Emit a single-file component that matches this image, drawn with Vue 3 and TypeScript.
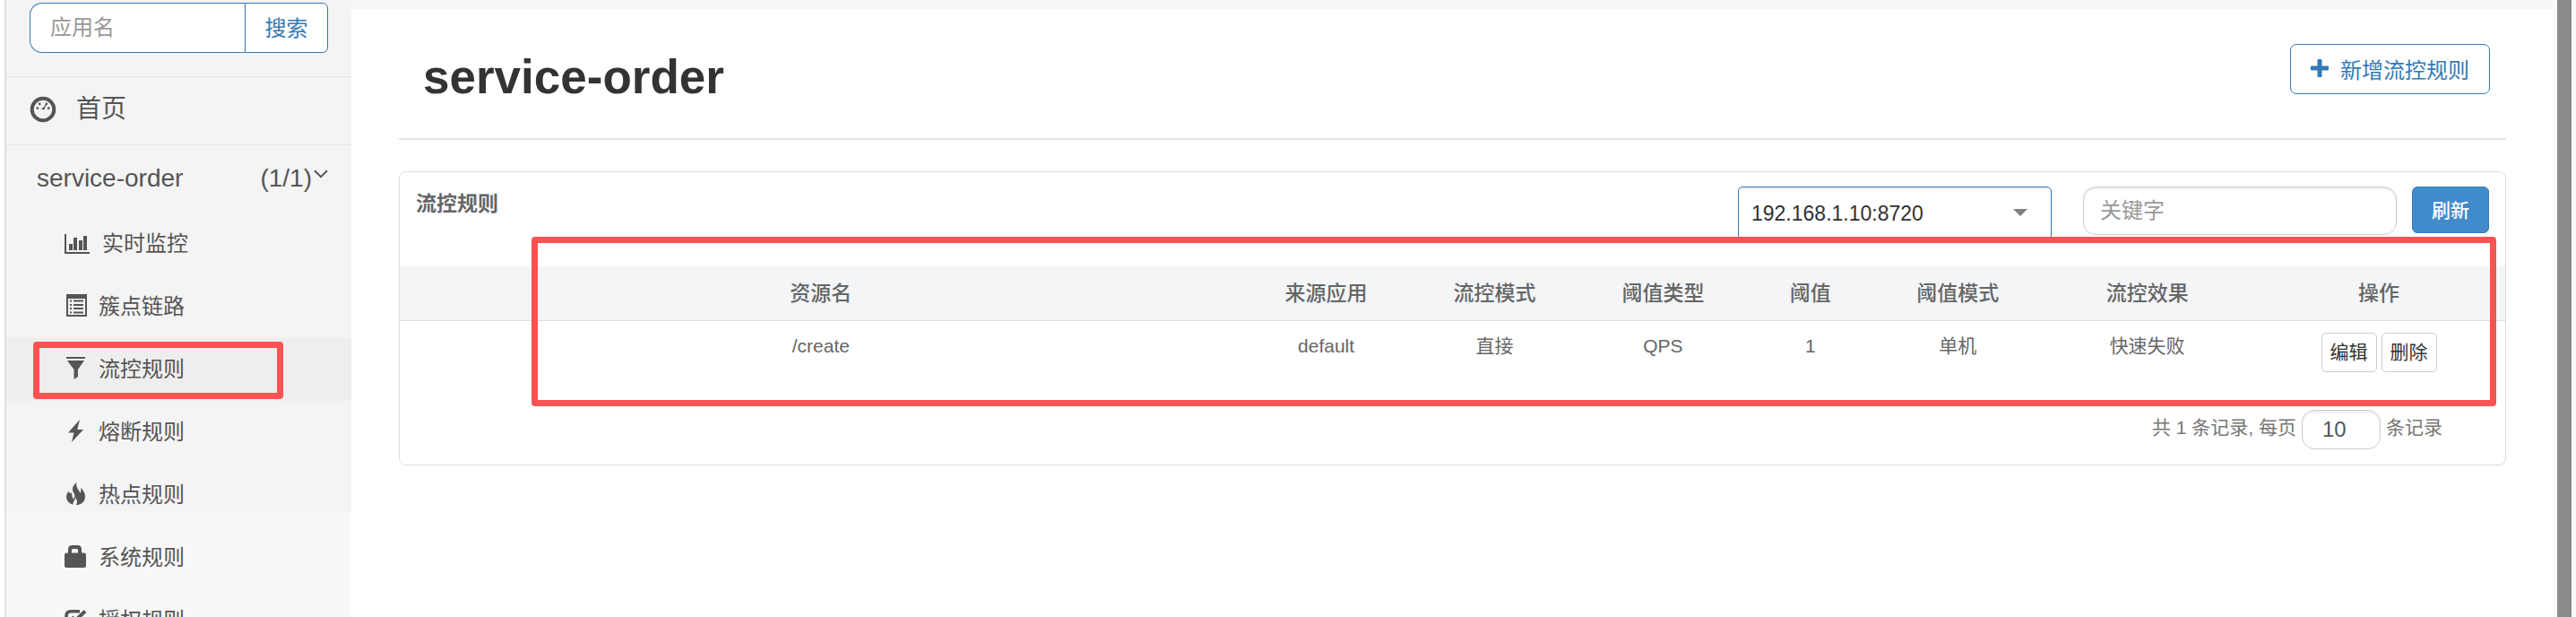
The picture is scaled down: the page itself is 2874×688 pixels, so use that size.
<script setup lang="ts">
import { ref } from 'vue'

interface NavItem {
  icon: string
  label: string
  active?: boolean
}

interface Rule {
  resource: string
  origin: string
  mode: string
  grade: string
  count: number
  cluster: string
  effect: string
}

const navItems: NavItem[] = [
  { icon: 'stats', label: '实时监控' },
  { icon: 'list', label: '簇点链路' },
  { icon: 'filter', label: '流控规则', active: true },
  { icon: 'flash', label: '熔断规则' },
  { icon: 'fire', label: '热点规则' },
  { icon: 'lock', label: '系统规则' },
  { icon: 'check', label: '授权规则' },
]

const columns: string[] = ['资源名', '来源应用', '流控模式', '阈值类型', '阈值', '阈值模式', '流控效果', '操作']

const rules: Rule[] = [
  { resource: '/create', origin: 'default', mode: '直接', grade: 'QPS', count: 1, cluster: '单机', effect: '快速失败' },
]

const appName = ref('')
const keyword = ref('')
const machine = ref('192.168.1.10:8720')
const pageSize = ref('10')
</script>

<template>
  <div class="page">
    <aside class="sidebar">
      <form class="search" @submit.prevent>
        <input v-model="appName" class="search-input" type="text" placeholder="应用名" aria-label="应用名" />
        <button class="search-button" type="submit">搜索</button>
      </form>
      <a class="home" href="#">
        <svg class="home-icon" viewBox="0 0 30 30" aria-hidden="true">
          <circle cx="15" cy="15" r="12.3" fill="none" stroke="currentColor" stroke-width="4" />
          <circle cx="8.8" cy="13.7" r="1.4" />
          <circle cx="11.2" cy="8.9" r="1.4" />
          <circle cx="18.8" cy="8.9" r="1.4" />
          <circle cx="21.2" cy="13.7" r="1.4" />
          <path d="M18.8 9L15.600 14.200" fill="none" stroke="currentColor" stroke-width="1.4" />
          <path d="M12.800 15l2.400-2.200 2 .6-.6 1.800z" />
        </svg>
        <span>首页</span>
      </a>
      <a class="app" href="#">
        <span>service-order</span>
        <span class="app-count">(1/1)
          <svg class="chevron" viewBox="0 0 16 10" aria-hidden="true">
            <path d="M1 1.2l7 7 7-7" fill="none" stroke="currentColor" stroke-width="2" />
          </svg>
        </span>
      </a>
      <nav class="menu">
        <a v-for="item in navItems" :key="item.icon" class="menu-item" :class="{ active: item.active }" href="#">
          <svg v-if="item.icon === 'stats'" class="icon wide" viewBox="0 0 28 28" aria-hidden="true">
            <path d="M0 3h2v20h26v2H0zM5 14h4v7H5zM10 7h4v14h-4zM16 10h4v11h-4zM21 5h4v16h-4z" />
          </svg>
          <svg v-else-if="item.icon === 'list'" class="icon" viewBox="0 0 24 28" aria-hidden="true">
            <path fill-rule="evenodd" d="M2 0h23v25H2zM4 5v18h19V5zM6 6.5h2v2H6zM10 6.5h11v2H10zM6 11h2v2H6zM10 11h11v2H10zM6 15h2v2H6zM10 15h11v2H10zM6 19.5h2v2H6zM10 19.5h11v2H10z" />
          </svg>
          <svg v-else-if="item.icon === 'filter'" class="icon" viewBox="0 0 24 28" aria-hidden="true">
            <path d="M2 0h21v2H2zM3 4h19l-7 10v8l-4.500 3V14z" />
          </svg>
          <svg v-else-if="item.icon === 'flash'" class="icon" viewBox="0 0 24 28" aria-hidden="true">
            <path d="M17 0L4 14.5h6.5L8 25l13-14h-6.8z" />
          </svg>
          <svg v-else-if="item.icon === 'fire'" class="icon" viewBox="0 0 24 28" aria-hidden="true">
            <path d="M13.5 0C9 3.500 7.500 7.500 10.500 12c1.300 2 1.500 4.500-.5 6.500C8.500 16.500 8 14 8.200 11.500 6.500 12.500 5.200 12 4.800 9.800 2.500 12 1.700 15 2.200 17.800 3 21.500 6 24 9.800 24.500 8.600 22.500 11.500 20 12.200 17.200c2 2 2.300 5.500.8 8C19 25 23 21 23 15.500c0-3.500-2-7-5-9.500.7 2.500.5 4.500-.6 5.800C16.500 8.500 12 5.500 13.500 0z" />
          </svg>
          <svg v-else-if="item.icon === 'lock'" class="icon" viewBox="0 0 24 28" aria-hidden="true">
            <path fill-rule="evenodd" d="M4 8.500V4.500Q4 0 8.500 0h6Q19 0 19 4.500V8.500h2.500Q24 8.500 24 11v11.500Q24 25 21.500 25h-19Q0 25 0 22.500V11Q0 8.500 2.500 8.500zM8 8.500h7V5.500Q15 4 13.500 4h-4Q8 4 8 5.500z" />
          </svg>
          <svg v-else class="icon" viewBox="0 0 24 28" aria-hidden="true">
            <path d="M17 3.800H7Q2 3.800 2 9v9q0 5 5 5h9q5 0 5-5v-3" fill="none" stroke="currentColor" stroke-width="3.600" />
            <path d="M8 10l4 4L23 3.500" fill="none" stroke="currentColor" stroke-width="4" />
          </svg>
          <span>{{ item.label }}</span>
          <i v-if="item.active" class="mark mark-menu" aria-hidden="true"></i>
        </a>
      </nav>
    </aside>

    <main class="main">
      <header class="header">
        <h1>service-order</h1>
        <button class="add" type="button">
          <svg class="plus" viewBox="0 0 20 20" aria-hidden="true">
            <path d="M8.500 0h3q1 0 1 1v6.500H19q1 0 1 1v3q0 1-1 1h-6.500V19q0 1-1 1h-3q-1 0-1-1v-6.500H1q-1 0-1-1v-3q0-1 1-1h6.500V1q0-1 1-1z" />
          </svg>
          <span>新增流控规则</span>
        </button>
      </header>

      <section class="panel">
        <div class="toolbar">
          <h2>流控规则</h2>
          <div class="select-wrap">
            <select v-model="machine" class="machine" aria-label="机器">
              <option>192.168.1.10:8720</option>
            </select>
            <svg class="caret" viewBox="0 0 16 8" aria-hidden="true"><path d="M0 0h16L8 8z" /></svg>
          </div>
          <input v-model="keyword" class="keyword" type="text" placeholder="关键字" aria-label="关键字" />
          <button class="refresh" type="button">刷新</button>
        </div>

        <div class="table-wrap">
          <table>
            <colgroup>
              <col class="c40" /><col class="c8" /><col class="c8" /><col class="c8" />
              <col class="c6" /><col class="c8" /><col class="c10" /><col class="c12" />
            </colgroup>
            <thead>
              <tr><th v-for="c in columns" :key="c" scope="col">{{ c }}</th></tr>
            </thead>
            <tbody>
              <tr v-for="r in rules" :key="r.resource">
                <td>{{ r.resource }}</td>
                <td>{{ r.origin }}</td>
                <td>{{ r.mode }}</td>
                <td>{{ r.grade }}</td>
                <td>{{ r.count }}</td>
                <td>{{ r.cluster }}</td>
                <td>{{ r.effect }}</td>
                <td>
                  <div class="actions">
                    <button type="button">编辑</button>
                    <button type="button">删除</button>
                  </div>
                </td>
              </tr>
            </tbody>
          </table>
          <i class="mark mark-table" aria-hidden="true"></i>
        </div>

        <footer class="pager">
          <label for="page-size">共 1 条记录, 每页</label>
          <input id="page-size" v-model="pageSize" type="text" />
          <span>条记录</span>
        </footer>
      </section>
    </main>
    <div class="scroll-track" aria-hidden="true"></div>
  </div>
</template>

<style>
body {
  margin: 0;
  background: #fff;
}
</style>

<style scoped>
.page,
.page * {
  box-sizing: border-box;
}

.page {
  display: flex;
  height: 100vh;
  overflow: hidden;
  padding-left: 5px;
  font-family: "Liberation Sans", "Noto Sans CJK SC", sans-serif;
  color: #666;
}

button,
input,
select {
  font-family: inherit;
  margin: 0;
}

a {
  color: #555;
  text-decoration: none;
}

svg {
  flex: none;
  fill: currentColor;
}

.sidebar {
  flex: 0 0 387px;
  min-width: 0;
  border-left: 2px solid #e0e0e0;
  background: linear-gradient(#f4f4f4 83vh, #f8f8f8 83vh);
}

.search {
  display: flex;
  padding: 3px 26px 26px;
}

.search-input {
  flex: 1;
  width: 0;
  min-width: 0;
  height: 56px;
  padding: 0 22px;
  border: 1px solid #337ab7;
  border-right: 0;
  border-radius: 14px 0 0 14px;
  background: #fff;
  font-size: 24px;
}

.search-button {
  width: 93px;
  height: 56px;
  padding: 0 0 3px;
  border: 1px solid #337ab7;
  border-radius: 0 6px 6px 0;
  background: #fff;
  color: #337ab7;
  font-size: 24px;
}

::placeholder {
  color: #999;
  opacity: 1;
}

.home {
  display: flex;
  align-items: center;
  gap: 22px;
  height: 76px;
  padding: 0 26px 3px;
  border-top: 1px solid #e7e7e7;
  font-size: 28px;
  line-height: 40px;
}

.home-icon {
  width: 30px;
  height: 30px;
}

.app {
  display: flex;
  justify-content: space-between;
  align-items: center;
  height: 76px;
  padding: 0 26px 2px 34px;
  border-top: 1px solid #e7e7e7;
  font-size: 28px;
  line-height: 40px;
}

.app-count {
  display: flex;
  gap: 2px;
}

.chevron {
  width: 16px;
  height: 10px;
  margin-top: 10px;
}

.menu-item {
  position: relative;
  display: flex;
  align-items: center;
  gap: 14px;
  height: 70px;
  padding: 0 65px;
  font-size: 24px;
  line-height: 36px;
}

.menu-item.active {
  background: #eee;
}

.icon {
  width: 24px;
  height: 28px;
  overflow: visible;
}

.icon.wide {
  width: 28px;
}

.mark {
  position: absolute;
  border: 7px solid #fb5252;
  border-radius: 4px;
  pointer-events: none;
}

.mark-menu {
  inset: 4px 76px 2px 30px;
}

.mark-table {
  inset: -33px 10px -24px 147px;
}

.main {
  flex: 1;
  min-width: 0;
  padding: 0 52px 0 53px;
  border-top: 11px solid #f7f7f7;
}

.header {
  display: flex;
  justify-content: space-between;
  align-items: flex-start;
  height: 145px;
  padding: 38px 18px 0 27px;
  border-bottom: 2px solid #e4e4e4;
}

h1 {
  margin: 0;
  color: #333;
  font-size: 53px;
  line-height: 74px;
}

.add {
  display: flex;
  align-items: center;
  gap: 13px;
  height: 56px;
  padding: 0 22px 2px;
  border: 1px solid #337ab7;
  border-radius: 7px;
  background: #fff;
  color: #337ab7;
  font-size: 24px;
}

.plus {
  width: 20px;
  height: 20px;
}

.panel {
  margin-top: 35px;
  border: 1px solid #ddd;
  border-radius: 8px;
}

.toolbar {
  display: flex;
  align-items: flex-start;
  height: 105px;
  padding: 16px 18px 0;
}

h2 {
  margin: 0;
  flex: 1;
  font-size: 23px;
  font-weight: 700;
  line-height: 38px;
}

.select-wrap {
  position: relative;
  width: 350px;
  margin-right: 35px;
}

.machine {
  width: 100%;
  height: 60px;
  padding: 0 60px 0 14px;
  border: 1px solid #337ab7;
  border-radius: 5px;
  appearance: none;
  background: #fff;
  box-shadow: inset 0 2px 2px rgba(0, 0, 0, 0.08);
  color: #303030;
  font-size: 23px;
}

.caret {
  position: absolute;
  top: 25px;
  right: 27px;
  width: 16px;
  height: 8px;
  color: #808080;
}

.keyword {
  width: 350px;
  height: 54px;
  margin: 0 17px 0 0;
  padding: 0 18px;
  border: 1px solid #ccc;
  border-radius: 14px;
  box-shadow: inset 0 2px 2px rgba(0, 0, 0, 0.075);
  color: #555;
  font-size: 24px;
}

.refresh {
  width: 86px;
  height: 52px;
  padding: 0 0 3px;
  border: 1px solid #357ebd;
  border-radius: 6px;
  background: #428bca;
  color: #fff;
  font-size: 21px;
  font-weight: 500;
}

.table-wrap {
  position: relative;
}

table {
  width: 100%;
  table-layout: fixed;
  border-collapse: collapse;
  text-align: center;
}

.c40 { width: 40%; }
.c12 { width: 12%; }
.c10 { width: 10%; }
.c8 { width: 8%; }
.c6 { width: 6%; }

th {
  height: 60px;
  padding: 0 0 3px;
  border-bottom: 1px solid #ddd;
  background: #f3f5f7;
  font-size: 23px;
  font-weight: 500;
}

td {
  padding: 13px 0 14px;
  font-size: 21px;
  line-height: 30px;
  vertical-align: top;
}

.actions {
  display: flex;
  justify-content: center;
  gap: 5px;
}

.actions button {
  width: 62px;
  height: 44px;
  padding: 0 0 3px;
  border: 1px solid #ccc;
  border-radius: 5px;
  background: #fff;
  color: #333;
  font-size: 21px;
}

.pager {
  display: flex;
  justify-content: flex-end;
  gap: 6px;
  padding: 28px 70px 17px;
  color: #777;
  font-size: 21px;
  line-height: 40px;
}

.pager input {
  width: 88px;
  height: 44px;
  padding: 0 22px;
  border: 1px solid #ccc;
  border-radius: 14px;
  box-shadow: inset 0 2px 2px rgba(0, 0, 0, 0.075);
  color: #555;
  font-size: 24px;
}

.scroll-track {
  flex: 0 0 26px;
  border: solid #fafafa;
  border-width: 0 5px;
  background: #8b8b8b;
}
</style>
